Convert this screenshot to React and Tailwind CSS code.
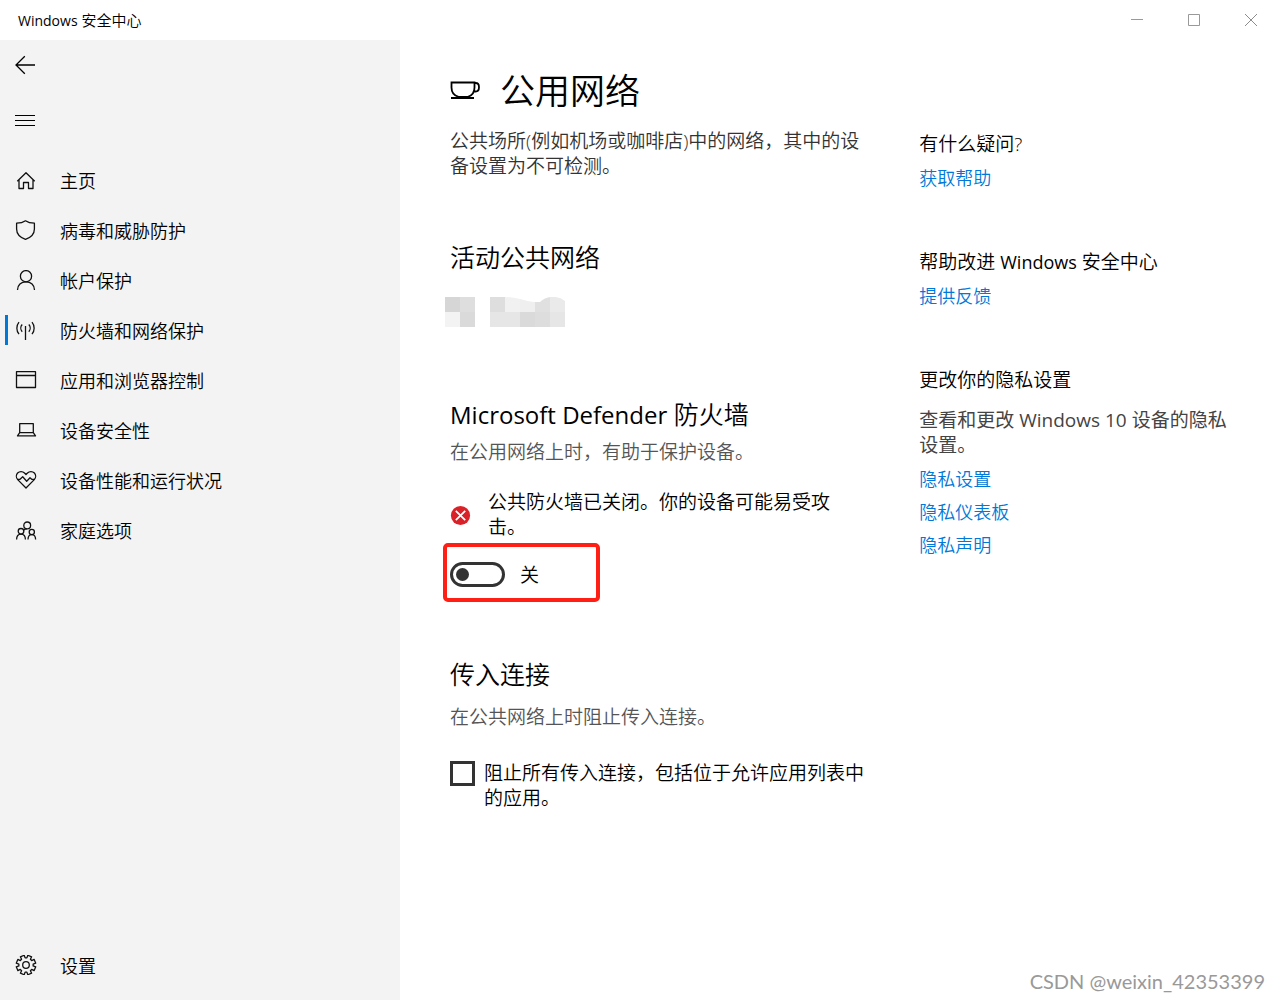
import React, { useState } from 'react';

// Eight-toothed cog outline around (11, 10)
const gearPath = Array.from({ length: 8 }, (_, i) => {
  const step = (Math.PI * 2) / 8;
  return [[-0.27, 7.2], [-0.21, 9.9], [0.21, 9.9], [0.27, 7.2]].map(([offset, r], j) => {
    const a = i * step + step / 2 + offset;
    const x = (11 + Math.sin(a) * r).toFixed(2);
    const y = (10 - Math.cos(a) * r).toFixed(2);
    return `${i === 0 && j === 0 ? 'M' : 'L'}${x} ${y}`;
  }).join('');
}).join('') + 'Z';

const icons = {
  home: <path d="M2.3 11.2L11 2.7l8.7 8.5M4 9.8v8.7h4.5v-6h5v6H18V9.8" />,
  shield: <path d="M10.5.8C8 2.6 5 3.2 1.6 3.2V9c0 5 3.4 8.4 8.9 10.4C16 17.4 19.4 14 19.4 9V3.2C16 3.2 13 2.6 10.5.8z" />,
  person: (
    <>
      <circle cx="11" cy="6.2" r="5.6" />
      <path d="M2.5 20c0-5 3.6-8.2 8.5-8.2s8.5 3.2 8.5 8.2" />
    </>
  ),
  antenna: (
    <path d="M10.5 6v14M4 2.2a9.5 9.5 0 0 0 0 12M17 2.2a9.5 9.5 0 0 1 0 12M7.2 4.5a5.4 5.4 0 0 0 0 7.2M13.8 4.5a5.4 5.4 0 0 1 0 7.2" />
  ),
  browser: <path d="M1.5 1.7h19v15.8h-19zM1.5 5.5h19" />,
  laptop: <path d="M4.7 12.7V3.7h13.6v9M4.7 12.7h13.6l2.2 3.2H2.5z" />,
  heart: (
    <>
      <path d="M11 18L2.7 9.6A4.9 4.9 0 0 1 2.6 3a4.8 4.8 0 0 1 6.9 0L11 4.5 12.5 3a4.8 4.8 0 0 1 6.9 0 4.9 4.9 0 0 1-.1 6.6z" />
      <path d="M2.5 9.3h2.5l2.7-2.6 4 4.5 3.3-3.4 1.7 1.5h2.8" />
    </>
  ),
  family: (
    <>
      <circle cx="12.2" cy="5.4" r="3.4" />
      <circle cx="6" cy="11.3" r="2.8" />
      <circle cx="16.8" cy="12" r="2.6" />
      <path d="M1.6 19.6c0-3.3 1.8-5.5 4.4-5.5s4.4 2.2 4.4 5.5M13 19.6c0-3 1.4-5 3.8-5s3.8 2 3.8 5M8.5 10.3c.8-.9 2-1.5 3.5-1.5" />
    </>
  ),
  gear: (
    <>
      <path d={gearPath} />
      <circle cx="11" cy="10" r="3.3" />
    </>
  ),
};

const navItems = [
  { icon: 'home', label: '主页' },
  { icon: 'shield', label: '病毒和威胁防护' },
  { icon: 'person', label: '帐户保护' },
  { icon: 'antenna', label: '防火墙和网络保护', active: true },
  { icon: 'browser', label: '应用和浏览器控制' },
  { icon: 'laptop', label: '设备安全性' },
  { icon: 'heart', label: '设备性能和运行状况' },
  { icon: 'family', label: '家庭选项' },
];

const NavLink = ({ icon, label, active }) => (
  <a
    href="#"
    aria-current={active ? 'page' : undefined}
    className="relative flex h-[50px] items-center gap-[23px] px-[15px] text-[18px] text-black hover:bg-black/5"
  >
    {active && <span className="absolute left-[5px] top-[10px] h-[30px] w-[3px] bg-[#0078d7]" />}
    <svg viewBox="0 0 22 20" className="h-5 w-[22px] shrink-0 fill-none stroke-[#111]" strokeWidth="1.3" strokeLinejoin="round">
      {icons[icon]}
    </svg>
    <span className="mt-0.5">{label}</span>
  </a>
);

const TitleBar = () => (
  <header className="flex h-10 items-center justify-between bg-white pl-[18px] pr-px">
    <span className="text-[15px]"><span className="text-[14px] font-normal">Windows</span> 安全中心</span>
    <div className="flex">
      <button type="button" aria-label="最小化" className="flex h-10 w-[57px] items-center justify-center">
        <svg viewBox="0 0 12 12" className="h-3 w-3 fill-none stroke-[#999]"><path d="M0 5.5h12" /></svg>
      </button>
      <button type="button" aria-label="最大化" className="flex h-10 w-[57px] items-center justify-center">
        <svg viewBox="0 0 12 12" className="h-3 w-3 fill-none stroke-[#999]"><path d="M.5.5h11v11H.5z" /></svg>
      </button>
      <button type="button" aria-label="关闭" className="flex h-10 w-[57px] items-center justify-center">
        <svg viewBox="0 0 12 12" className="h-3 w-3 fill-none stroke-[#8c8c8c]"><path d="M0 0l12 12M12 0L0 12" /></svg>
      </button>
    </div>
  </header>
);

const Sidebar = () => (
  <aside className="flex w-[400px] shrink-0 flex-col bg-[#f3f3f3] pb-[10px]">
    <button type="button" aria-label="返回" className="flex h-[50px] items-center px-[15px]">
      <svg viewBox="0 0 20 20" className="h-5 w-5 fill-none stroke-black" strokeWidth="1.3"><path d="M20 10H1M9.8 1.2L1 10l8.8 8.8" /></svg>
    </button>
    <button type="button" aria-label="菜单" className="flex h-[60px] items-center px-[15px]">
      <svg viewBox="0 0 20 20" className="h-5 w-5 fill-none stroke-black"><path d="M0 5.5h20M0 10.5h20M0 15.5h20" /></svg>
    </button>
    <nav className="mt-[5px] flex flex-1 flex-col">
      {navItems.map((item) => (
        <NavLink key={item.label} {...item} />
      ))}
      <div className="mt-auto">
        <NavLink icon="gear" label="设置" />
      </div>
    </nav>
  </aside>
);

// Pixelated network name
const MaskedNetwork = () => (
  <svg viewBox="0 0 120 30" className="-ml-[5px] mt-[25px] h-[30px] w-[120px]" role="img" aria-label="网络">
    <path fill="#d6d6d6" d="M0 0h15v15H0z" />
    <path fill="#dedede" d="M15 0h15v15H15zM45 0h15v15H45z" />
    <path fill="#f3f3f3" d="M0 15h15v15H0z" />
    <path fill="#dadada" d="M15 15h15v15H15zM75 15h15v15H75z" />
    <path fill="#f1f1f1" d="M60 0q8 0 15 2v13H60z" />
    <path fill="#efefef" d="M75 2q10 3 15 3v10H75z" />
    <path fill="#e0e0e0" d="M90 5h5q4-4 10-5v15H90z" />
    <path fill="#eaeaea" d="M105 0q9-1 15 4v11h-15z" />
    <path fill="#e6e6e6" d="M45 15h30v15H45zM105 15h15v15h-15z" />
    <path fill="#dddddd" d="M90 15h15v15H90z" />
  </svg>
);

const SideSection = ({ title, children }) => (
  <section>
    <h3>{title}</h3>
    {children}
  </section>
);

const TextLink = ({ children }) => (
  <a href="#" className="block w-fit text-[18px] leading-[25px] text-[#0078d7] hover:text-gray-500">{children}</a>
);

const App = () => {
  const [firewallOn, setFirewallOn] = useState(false);
  const [blockAll, setBlockAll] = useState(false);

  return (
    <div
      lang="zh-CN"
      className="relative flex min-h-screen flex-col bg-white font-['Open_Sans','Noto_Sans_CJK_SC',sans-serif] font-[350] text-black"
    >
      <TitleBar />
      <div className="flex flex-1">
        <Sidebar />

        <main className="grid flex-1 grid-cols-[4fr_3fr] gap-[55px] px-[50px] pb-10 text-[19px] leading-[25px]">
          <div className="pt-[26px]">
            <div className="flex items-center gap-5">
              <svg viewBox="0 0 30 18" className="mb-[3px] h-[18px] w-[30px] shrink-0 fill-none stroke-black" strokeWidth="1.8">
                <path d="M1.5 1.5h23v5c0 4.5-2.5 8-6.5 9.3H8.500C4 14.500 1.500 11 1.500 6.500zM1 17h23M24.500 2h1.200c2 0 3.300 1.700 3.300 4.200s-1.400 4.300-3.500 4.300h-1.800" />
              </svg>
              <h1 className="text-[35px] leading-[50px]">公用网络</h1>
            </div>
            <p className="mt-[13px] text-[#333]">公共场所(例如机场或咖啡店)中的网络，其中的设备设置为不可检测。</p>

            <h2 className="mt-[63px] text-[25px] leading-[30px]">活动公共网络</h2>
            <MaskedNetwork />

            <h2 className="mt-[72px] text-[25px] leading-[30px]"><span className="text-[24px] font-normal">Microsoft Defender</span> 防火墙</h2>
            <p className="mt-[10px] text-[#555]">在公用网络上时，有助于保护设备。</p>
            <div className="mt-[25px] flex items-center gap-[17px]">
              <svg viewBox="0 0 21 21" className="h-[21px] w-[21px] shrink-0">
                <circle cx="10.5" cy="10.5" r="9.6" fill="#da2128" />
                <path d="M5.8 5.8l9.4 9.4M15.2 5.8l-9.4 9.4" stroke="#fff" strokeWidth="1.7" />
              </svg>
              <p>公共防火墙已关闭。你的设备可能易受攻击。</p>
            </div>
            <div className="-ml-[7px] mt-[3px] flex h-[59px] w-[157px] items-center rounded-[5px] border-4 border-[#ff1f14] pl-[3px] pt-1">
              <label className="flex items-center gap-[15px]">
                <input
                  type="checkbox"
                  role="switch"
                  checked={firewallOn}
                  onChange={(e) => setFirewallOn(e.target.checked)}
                  className="flex h-[25px] w-[55px] appearance-none items-center rounded-full border-[3px] border-[#333] px-[3px] before:h-[13px] before:w-[13px] before:rounded-full before:bg-[#333] checked:justify-end checked:border-[#0078d7] checked:bg-[#0078d7] checked:before:bg-white"
                />
                <span className="mt-0.5">{firewallOn ? '开' : '关'}</span>
              </label>
            </div>

            <h2 className="mt-[57px] text-[25px] leading-[30px]">传入连接</h2>
            <p className="mt-4 text-[#555]">在公共网络上时阻止传入连接。</p>
            <label className="mt-[31px] flex items-start gap-[9px]">
              <input
                type="checkbox"
                checked={blockAll}
                onChange={(e) => setBlockAll(e.target.checked)}
                className="h-[25px] w-[25px] shrink-0 appearance-none border-[3px] border-[#333] bg-white checked:bg-[#0078d7]"
              />
              <span>阻止所有传入连接，包括位于允许应用列表中的应用。</span>
            </label>
          </div>

          <div className="flex flex-col gap-[59px] pt-[92px]">
            <SideSection title="有什么疑问?">
              <div className="mt-[9px]"><TextLink>获取帮助</TextLink></div>
            </SideSection>
            <SideSection title={<>帮助改进 <span className="text-[18px] font-normal">Windows</span> 安全中心</>}>
              <div className="mt-[9px]"><TextLink>提供反馈</TextLink></div>
            </SideSection>
            <SideSection title="更改你的隐私设置">
              <p className="mt-[15px] font-normal text-[#444]">查看和更改 Windows 10 设备的隐私设置。</p>
              <div className="mt-[9px] flex flex-col gap-2">
                <TextLink>隐私设置</TextLink>
                <TextLink>隐私仪表板</TextLink>
                <TextLink>隐私声明</TextLink>
              </div>
            </SideSection>
          </div>
        </main>
      </div>

      <span className="absolute bottom-[7px] right-[15px] font-['Lato',sans-serif] text-[20px] font-normal leading-6 text-[#999]">
        CSDN @weixin_42353399
      </span>
    </div>
  );
};

export default App;
